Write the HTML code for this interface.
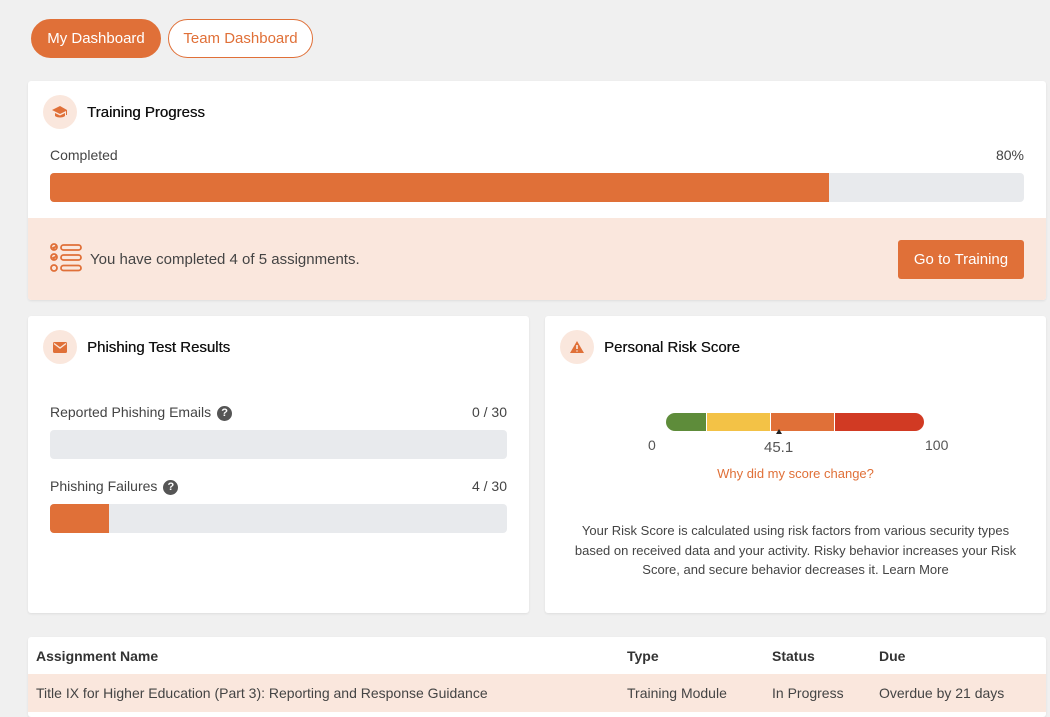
<!DOCTYPE html>
<html><head><style>
*{box-sizing:border-box;margin:0;padding:0}
body{width:1050px;height:714px;overflow:hidden;background:#f0f0f0;font-family:"Liberation Sans",sans-serif;color:#333;font-size:14px;position:relative}
.abs{position:absolute}
.btn{position:absolute;height:39px;border-radius:20px;border:1px solid #e07038;font-size:15px;line-height:37px;text-align:center}
.card{position:absolute;background:#fff;border-radius:3px;box-shadow:0 1px 2px rgba(0,0,0,.08)}
.ic{position:absolute;width:34px;height:34px;border-radius:50%;background:#fae7dd;display:flex;align-items:center;justify-content:center}
.title{position:absolute;font-size:15px;color:#111;text-shadow:0.3px 0 0 #111}
.bar{position:absolute;height:29px;background:#e8eaed;border-radius:4px;overflow:hidden}
.bar i{display:block;height:100%;background:#e07038}
.q{display:inline-block;width:15px;height:15px;border-radius:50%;background:#555;color:#fff;font-size:11px;line-height:15px;text-align:center;font-weight:bold;vertical-align:1px;margin-left:6px}
</style></head><body>
<div class="btn" style="left:31px;top:19px;width:130px;background:#e07038;color:#fff">My Dashboard</div>
<div class="btn" style="left:168px;top:19px;width:145px;background:#fff;color:#e07038">Team Dashboard</div>

<div class="card" style="left:28px;top:81px;width:1018px;height:219px;overflow:hidden">
 <div class="ic" style="left:15px;top:14px"><svg width="16" height="14" viewBox="0 0 16 14"><path d="M8 1L0 5l8 4 6-3v4h1V5z" fill="#e07038"/><path d="M3 8v3c2 2 8 2 10 0V8l-5 2.5z" fill="#e07038"/></svg></div>
 <div class="title" style="left:59px;top:23px">Training Progress</div>
 <div class="abs" style="left:22px;top:66px;font-size:14px;color:#444">Completed</div>
 <div class="abs" style="right:22px;top:66px;font-size:14px;color:#444">80%</div>
 <div class="bar" style="left:22px;top:92px;width:974px"><i style="width:779px"></i></div>
 <div class="abs" style="left:0;top:137px;width:1018px;height:82px;background:#fae7dd">
  <svg class="abs" style="left:21px;top:24px" width="34" height="34" viewBox="0 0 34 34" fill="none" stroke="#e07038" stroke-width="1.8"><circle cx="5" cy="5" r="3"/><path d="M3.5 5l1.3 1.3 2.5-2.5"/><rect x="12" y="3" width="20" height="5" rx="2.5"/><circle cx="5" cy="15" r="3"/><path d="M3.5 15l1.3 1.3 2.5-2.5"/><rect x="12" y="13" width="20" height="5" rx="2.5"/><circle cx="5" cy="26" r="3"/><rect x="12" y="23.5" width="20" height="5" rx="2.5"/></svg>
  <div class="abs" style="left:62px;top:33px;font-size:15px;color:#444">You have completed 4 of 5 assignments.</div>
  <div class="abs" style="left:870px;top:22px;width:126px;height:39px;background:#e07038;color:#fff;border-radius:3px;font-size:15px;line-height:39px;text-align:center">Go to Training</div>
 </div>
</div>

<div class="card" style="left:28px;top:316px;width:501px;height:297px">
 <div class="ic" style="left:15px;top:14px"><svg width="14" height="11" viewBox="0 0 14 11"><rect width="14" height="11" rx="1.5" fill="#e07038"/><path d="M1 1.5l6 4.5 6-4.5" stroke="#fae7dd" stroke-width="1.3" fill="none"/></svg></div>
 <div class="title" style="left:59px;top:23px">Phishing Test Results</div>
 <div class="abs" style="left:22px;top:88px;font-size:14px;color:#444">Reported Phishing Emails<span class="q">?</span></div>
 <div class="abs" style="right:22px;top:88px;font-size:14px;color:#444">0 / 30</div>
 <div class="bar" style="left:22px;top:114px;width:457px"></div>
 <div class="abs" style="left:22px;top:162px;font-size:14px;color:#444">Phishing Failures<span class="q">?</span></div>
 <div class="abs" style="right:22px;top:162px;font-size:14px;color:#444">4 / 30</div>
 <div class="bar" style="left:22px;top:188px;width:457px"><i style="width:59px"></i></div>
</div>

<div class="card" style="left:545px;top:316px;width:501px;height:297px">
 <div class="ic" style="left:15px;top:14px"><svg width="14" height="12" viewBox="0 0 14 12"><path d="M7 0L14 12H0z" fill="#e07038"/><path d="M7 4v4M7 9.5v1" stroke="#fff" stroke-width="1.4"/></svg></div>
 <div class="title" style="left:59px;top:23px">Personal Risk Score</div>
 <div class="abs" style="left:121px;top:97px;width:258px;height:18px;border-radius:9px;overflow:hidden;display:flex;gap:1px;background:#fff">
  <div style="width:40px;background:#5e8c3a"></div><div style="width:63px;background:#f3c246"></div><div style="width:63px;background:#e07038"></div><div style="flex:1;background:#d13a23"></div>
 </div>
 <div class="abs" style="left:231px;top:113px;width:0;height:0;border-left:3px solid transparent;border-right:3px solid transparent;border-bottom:5px solid #222"></div>
 <div class="abs" style="left:103px;top:121px;font-size:14px;color:#555">0</div>
 <div class="abs" style="left:219px;top:123px;font-size:15px;color:#555">45.1</div>
 <div class="abs" style="left:380px;top:121px;font-size:14px;color:#555">100</div>
 <div class="abs" style="left:0;width:501px;top:150px;text-align:center;font-size:13px;color:#e07038">Why did my score change?</div>
 <div class="abs" style="left:20px;width:461px;top:205px;text-align:center;font-size:13px;line-height:19.5px;color:#444">Your Risk Score is calculated using risk factors from various security types based on received data and your activity. Risky behavior increases your Risk Score, and secure behavior decreases it. Learn More</div>
</div>

<div class="card" style="left:28px;top:637px;width:1018px;height:80px">
 <div class="abs" style="left:8px;top:11px;font-size:14px;font-weight:bold;color:#333">Assignment Name</div>
 <div class="abs" style="left:599px;top:11px;font-size:14px;font-weight:bold;color:#333">Type</div>
 <div class="abs" style="left:744px;top:11px;font-size:14px;font-weight:bold;color:#333">Status</div>
 <div class="abs" style="left:851px;top:11px;font-size:14px;font-weight:bold;color:#333">Due</div>
 <div class="abs" style="left:0;top:37px;width:1018px;height:38px;background:#fae7dd;font-size:14px;color:#444">
  <span class="abs" style="left:8px;top:11px">Title IX for Higher Education (Part 3): Reporting and Response Guidance</span>
  <span class="abs" style="left:599px;top:11px">Training Module</span>
  <span class="abs" style="left:744px;top:11px">In Progress</span>
  <span class="abs" style="left:851px;top:11px">Overdue by 21 days</span>
 </div>
</div>
</body></html>
